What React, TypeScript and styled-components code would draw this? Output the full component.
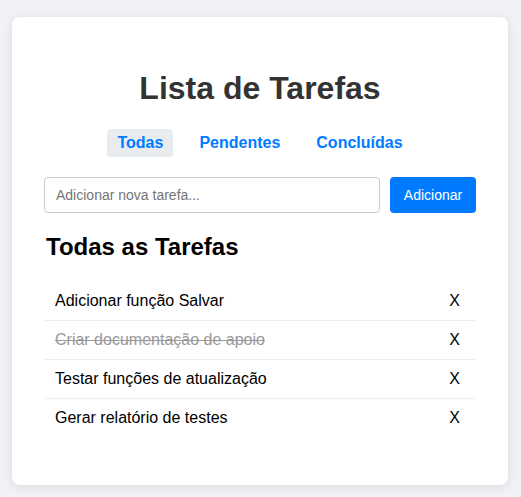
import React, { useState } from "react";
import styled, { createGlobalStyle } from "styled-components";

const GlobalStyle = createGlobalStyle`
  html, body { margin: 0; padding: 0; }
  body {
    background: #f0f2f5;
    font-family: "Liberation Sans", Arial, sans-serif;
  }
`;

const Page = styled.div`
  padding: 17px 13px 12px 12px;
`;

const Card = styled.div`
  background: #fff;
  border-radius: 8px;
  box-shadow: 0 2px 10px rgba(0, 0, 0, 0.1);
  padding: 32px;
  width: 432px;
`;

const Title = styled.h1`
  font-size: 32px;
  line-height: 37px;
  margin: 21px 0 22px;
  text-align: center;
  color: #333;
`;

const Tabs = styled.div`
  display: flex;
  justify-content: center;
  gap: 16px;
  margin-bottom: 20px;
`;

const Tab = styled.button<{ $active?: boolean }>`
  font-family: inherit;
  font-size: 16px;
  font-weight: bold;
  line-height: 18px;
  color: #007bff;
  background: ${(p) => (p.$active ? "#e9ecef" : "transparent")};
  border: none;
  border-radius: 4px;
  padding: 5px 10px;
  cursor: pointer;
`;

const Form = styled.form`
  display: flex;
  gap: 10px;
`;

const Input = styled.input`
  flex: 1;
  height: 36px;
  box-sizing: border-box;
  border: 1px solid #ccc;
  border-radius: 4px;
  padding: 0 11px;
  font-family: inherit;
  font-size: 14px;
  &::placeholder { color: #757575; }
`;

const AddButton = styled.button`
  width: 86px;
  height: 36px;
  background: #007bff;
  color: #fff;
  border: none;
  border-radius: 4px;
  font-family: inherit;
  font-size: 14px;
  cursor: pointer;
`;

const Subtitle = styled.h2`
  font-size: 24px;
  line-height: 28px;
  margin: 20px 0 21px 2px;
  color: #000;
`;

const List = styled.ul`
  list-style: none;
  margin: 0 0 16px;
  padding: 0;
`;

const Item = styled.li`
  display: flex;
  align-items: center;
  justify-content: space-between;
  padding: 10px 10px 10px 11px;
  border-bottom: 1px solid #eee;
  font-size: 16px;
  line-height: 18px;
  &:last-child { border-bottom: none; }
`;

const ItemText = styled.span<{ $done?: boolean }>`
  color: ${(p) => (p.$done ? "#999" : "#000")};
  text-decoration: ${(p) => (p.$done ? "line-through" : "none")};
  cursor: pointer;
`;

const Remove = styled.button`
  background: none;
  border: none;
  font-family: inherit;
  font-size: 16px;
  line-height: 18px;
  color: #000;
  padding: 0 6px;
  cursor: pointer;
`;

const tasks = [
  { text: "Adicionar função Salvar", done: false },
  { text: "Criar documentação de apoio", done: true },
  { text: "Testar funções de atualização", done: false },
  { text: "Gerar relatório de testes", done: false },
];

export default function App() {
  const [filter, setFilter] = useState("Todas");
  return (
    <Page>
      <GlobalStyle />
      <Card>
        <Title>Lista de Tarefas</Title>
        <Tabs>
          {["Todas", "Pendentes", "Concluídas"].map((t) => (
            <Tab key={t} $active={filter === t} onClick={() => setFilter(t)}>
              {t}
            </Tab>
          ))}
        </Tabs>
        <Form onSubmit={(e) => e.preventDefault()}>
          <Input placeholder="Adicionar nova tarefa..." />
          <AddButton type="submit">Adicionar</AddButton>
        </Form>
        <Subtitle>Todas as Tarefas</Subtitle>
        <List>
          {tasks.map((t) => (
            <Item key={t.text}>
              <ItemText $done={t.done}>{t.text}</ItemText>
              <Remove>X</Remove>
            </Item>
          ))}
        </List>
      </Card>
    </Page>
  );
}
